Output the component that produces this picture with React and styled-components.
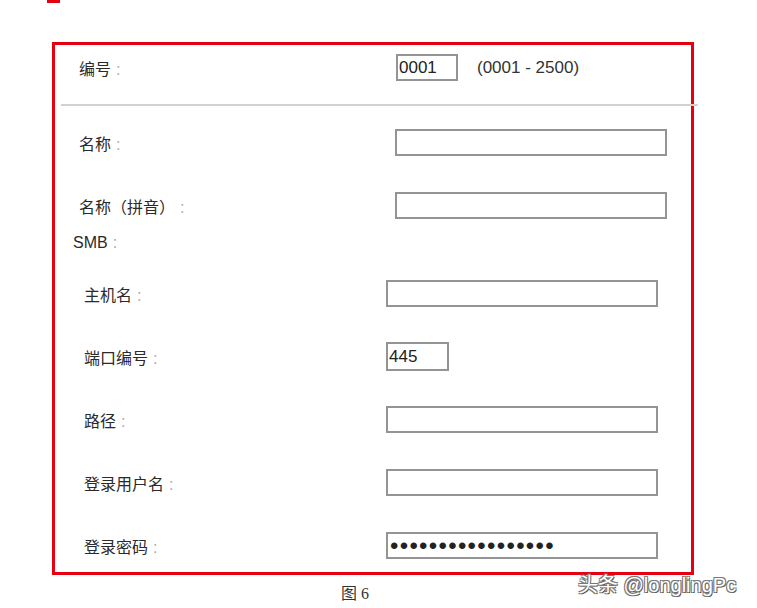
import React from "react"
import styled, { createGlobalStyle } from "styled-components"

const GlobalStyle = createGlobalStyle`
    html, body {
        margin: 0;
        padding: 0;
        background: #ffffff;
    }
    body {
        font-family: "Liberation Sans", "Noto Sans CJK SC", sans-serif;
        color: #333333;
    }
`

const Pagina = styled.div`
    position: relative;
    width: 757px;
    height: 608px;
    padding-left: 52px;
    box-sizing: border-box;
    overflow: hidden;
`

const MarcaTopo = styled.div`
    width: 13px;
    height: 3px;
    margin-left: -5px;
    background-color: #e60012;
`

const Painel = styled.div`
    margin-top: 39px;
    width: 642px;
    height: 533px;
    box-sizing: border-box;
    border: 3px solid #e60012;
    padding-top: 9px;
`

const Linha = styled.div`
    display: flex;
    align-items: center;
    height: 27px;
    margin-top: ${p => p.$top || 0}px;
    padding-left: ${p => p.$indent}px;
`

const Rotulo = styled.div`
    width: ${p => p.$width}px;
    flex-shrink: 0;
    font-size: 16px;
    color: #2a2a2a;
    white-space: nowrap;
`

const DoisPontos = styled.span`
    color: #a8a8a8;
    margin-left: 5px;
`

const Campo = styled.input`
    box-sizing: border-box;
    width: ${p => p.$width || 272}px;
    height: ${p => p.$height || 27}px;
    border: 2px solid #949494;
    padding: 0 1px;
    margin: 0;
    font-family: "Liberation Sans", sans-serif;
    font-size: 17px;
    color: #222222;
    background: #ffffff;
    outline: none;
    flex-shrink: 0;
`

const CampoSenha = styled(Campo)`
    font-size: 24px;
    letter-spacing: 1.3px;
    padding-left: 2px;
`

const Intervalo = styled.span`
    margin-left: 19px;
    font-size: 17px;
    color: #333333;
    white-space: nowrap;
`

const Divisor = styled.div`
    height: 2px;
    margin: 23px -7px 0 6px;
    background-color: #d2d2d2;
`

const TituloGrupo = styled.div`
    margin-top: 14px;
    padding-left: 18px;
    height: 20px;
    line-height: 20px;
    font-size: 16px;
    color: #2a2a2a;
`

const Legenda = styled.div`
    margin-top: 9px;
    padding-left: 289px;
    font-family: "Liberation Serif", "Noto Sans CJK SC", serif;
    font-size: 16px;
    line-height: 20px;
    color: #333333;
`

const MarcaDagua = styled.div`
    position: absolute;
    left: 578px;
    top: 569px;
    font-size: 20px;
    color: #ffffff;
    white-space: nowrap;
    text-shadow: -1px -1px 0 #777, 1px -1px 0 #777, -1px 1px 0 #777, 1px 1px 0 #555;
`

const smb = [
    { rotulo: "主机名", valor: "" },
    { rotulo: "端口编号", valor: "445", largura: 63, altura: 29 },
    { rotulo: "路径", valor: "" },
    { rotulo: "登录用户名", valor: "" },
]

const App = () => {
    return (
        <>
            <GlobalStyle />
            <Pagina>
                <MarcaTopo />
                <Painel>
                    <Linha $indent={24}>
                        <Rotulo $width={317}>编号<DoisPontos>:</DoisPontos></Rotulo>
                        <Campo $width={62} readOnly value="0001" />
                        <Intervalo>(0001 - 2500)</Intervalo>
                    </Linha>

                    <Divisor />

                    <Linha $indent={24} $top={23}>
                        <Rotulo $width={316}>名称<DoisPontos>:</DoisPontos></Rotulo>
                        <Campo readOnly value="" />
                    </Linha>
                    <Linha $indent={24} $top={36}>
                        <Rotulo $width={316}>名称（拼音）<DoisPontos>:</DoisPontos></Rotulo>
                        <Campo readOnly value="" />
                    </Linha>

                    <TituloGrupo>SMB<DoisPontos>:</DoisPontos></TituloGrupo>

                    {smb.map((item, i) => (
                        <Linha key={item.rotulo} $indent={29} $top={i === 0 ? 27 : 36}>
                            <Rotulo $width={302}>{item.rotulo}<DoisPontos>:</DoisPontos></Rotulo>
                            <Campo $width={item.largura} $height={item.altura} readOnly value={item.valor} />
                        </Linha>
                    ))}

                    <Linha $indent={29} $top={36}>
                        <Rotulo $width={302}>登录密码<DoisPontos>:</DoisPontos></Rotulo>
                        <CampoSenha type="password" readOnly value="12345678901234567" />
                    </Linha>
                </Painel>
                <Legenda>图 6</Legenda>
                <MarcaDagua>头条 @longlingPc</MarcaDagua>
            </Pagina>
        </>
    )
}

export default App
